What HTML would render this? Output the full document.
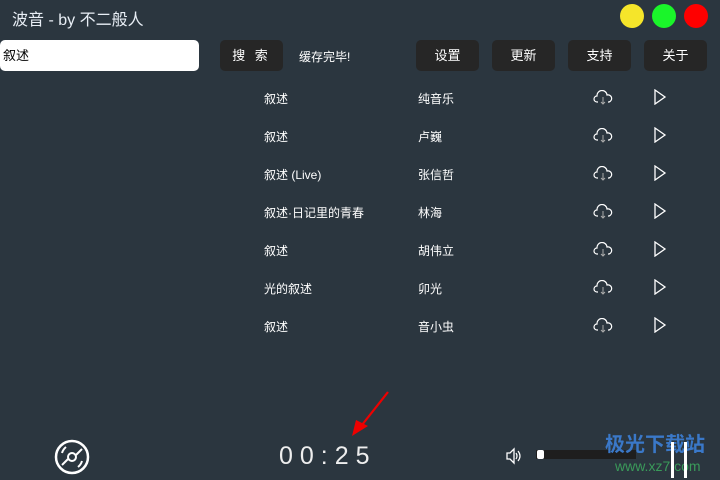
<!DOCTYPE html><html><head><meta charset="utf-8"><style>
body{margin:0;width:720px;height:480px;background:#2b363f;font-family:"Liberation Sans","Noto Sans CJK SC",sans-serif;color:#fff;position:relative;overflow:hidden}
.a{position:absolute}
.btn{position:absolute;top:40px;width:63px;height:31px;background:#262626;border-radius:5px;font-size:13px;text-align:center;line-height:31px}
.c{position:absolute;top:4px;width:24px;height:24px;border-radius:50%}
.r{position:absolute;font-size:12px;left:264px}
.r2{position:absolute;font-size:12px;left:418px}
</style></head><body>
<div class="a" style="left:12px;top:6px;font-size:16px;color:#e8eef5">波音 - by 不二般人</div>
<div class="c" style="left:620px;background:#f5e52a"></div>
<div class="c" style="left:652px;background:#1af52a"></div>
<div class="c" style="left:684px;background:#ff0000"></div>
<div class="a" style="left:0;top:40px;width:199px;height:31px;background:#fff;border-radius:5px;color:#000;font-size:13px;line-height:31px;text-indent:3px">叙述</div>
<div class="btn" style="left:220px;letter-spacing:3px">搜 索</div>
<div class="a" style="left:299px;top:48px;font-size:12px">缓存完毕!</div>
<div class="btn" style="left:416px">设置</div>
<div class="btn" style="left:492px">更新</div>
<div class="btn" style="left:568px">支持</div>
<div class="btn" style="left:644px">关于</div>
<div id="rows"></div>
<script>
var d=[["叙述","纯音乐"],["叙述","卢巍"],["叙述 (Live)","张信哲"],["叙述·日记里的青春","林海"],["叙述","胡伟立"],["光的叙述","卯光"],["叙述","音小虫"]];
var h="";d.forEach(function(x,i){var y=90+i*38;h+='<div class="r" style="top:'+y+'px">'+x[0]+'</div><div class="r2" style="top:'+y+'px">'+x[1]+'</div>'+
'<svg class="a" style="left:593px;top:'+(y)+'px" width="20" height="16" viewBox="0 0 20 16"><path d="M5 12H4a3 3 0 0 1 0-6 5 5 0 0 1 10-1 3.5 3.5 0 0 1 2 7h-1" fill="none" stroke="#fff" stroke-width="1.2"/><path d="M10 7v7M8 12l2 2 2-2" fill="none" stroke="#aaa" stroke-width="1"/></svg>'+
'<svg class="a" style="left:653px;top:'+(y-1)+'px" width="14" height="16"><path d="M2 1L12 8L2 15Z" fill="none" stroke="#fff" stroke-width="1.3"/></svg>';});
document.getElementById("rows").innerHTML=h;
</script>
<svg class="a" style="left:54px;top:439px" width="36" height="36" viewBox="0 0 36 36"><circle cx="18" cy="18" r="16" fill="none" stroke="#fff" stroke-width="2.5"/><circle cx="18" cy="18" r="4" fill="none" stroke="#fff" stroke-width="2"/><path d="M8 26L14 20M22 16L28 10M12 8a12 12 0 0 0-4 6M24 28a12 12 0 0 0 4-6" stroke="#fff" stroke-width="2" fill="none"/></svg>
<div class="a" style="left:279px;top:442px;font-size:25px;letter-spacing:7px;color:#eee">00:25</div>
<svg class="a" style="left:350px;top:390px" width="40" height="48"><path d="M38 2L8 40" stroke="#e00" stroke-width="2.2"/><path d="M2 46L6 30L18 36Z" fill="#e00"/></svg>
<svg class="a" style="left:505px;top:447px" width="18" height="18"><path d="M2 6h3l4-4v14l-4-4H2z" fill="none" stroke="#fff" stroke-width="1.3"/><path d="M11 6q2 3 0 6M13 4q4 5 0 10" fill="none" stroke="#fff" stroke-width="1.2"/></svg>
<div class="a" style="left:536px;top:450px;width:100px;height:9px;background:#1e1e1e"></div>
<div class="a" style="left:537px;top:450px;width:7px;height:9px;background:#fff;border-radius:2px"></div>
<div class="a" style="left:605px;top:428px;font-size:20px;font-weight:bold;color:#3a78c8">极光下载站</div>
<div class="a" style="left:615px;top:458px;font-size:14px;color:#3a9a5a">www.xz7.com</div>
<div class="a" style="left:671px;top:442px;width:3px;height:36px;background:#fff"></div>
<div class="a" style="left:684px;top:442px;width:3px;height:36px;background:#fff"></div>
</body></html>
